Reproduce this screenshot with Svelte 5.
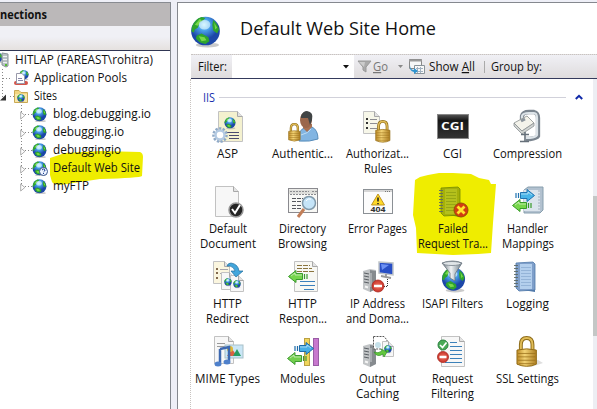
<script>
  const tree = [
    { text: 'HITLAP (FAREAST\\rohitra)', w: 138, x: 15, icon: 'server', ix: -6 },
    { text: 'Application Pools', w: 93, x: 34, icon: 'pools', ix: 13 },
    { text: 'Sites', w: 23, x: 34, icon: 'folder', ix: 14 },
    { text: 'blog.debugging.io', w: 98, x: 53, icon: 'globe', ix: 32 },
    { text: 'debugging.io', w: 71, x: 53, icon: 'globe', ix: 32 },
    { text: 'debuggingio', w: 68, x: 53, icon: 'globe', ix: 32 },
    { text: 'Default Web Site', w: 87, x: 53, icon: 'globeq', ix: 32 },
    { text: 'myFTP', w: 36, x: 53, icon: 'globe', ix: 32 }
  ];
  const features = [
    ['asp', ['ASP', 21]],
    ['authn', ['Authentic...', 61]],
    ['authz', ['Authorizat...', 63], ['Rules', 28]],
    ['cgi', ['CGI', 19]],
    ['compress', ['Compression', 69]],
    ['defdoc', ['Default', 38], ['Document', 56]],
    ['browse', ['Directory', 47], ['Browsing', 49]],
    ['error', ['Error Pages', 59]],
    ['failed', ['Failed', 30], ['Request Tra...', 70]],
    ['handler', ['Handler', 41], ['Mappings', 52]],
    ['redirect', ['HTTP', 29], ['Redirect', 43]],
    ['response', ['HTTP', 29], ['Respon...', 48]],
    ['ip', ['IP Address', 55], ['and Doma...', 63]],
    ['isapi', ['ISAPI Filters', 61]],
    ['logging', ['Logging', 43]],
    ['mime', ['MIME Types', 65]],
    ['modules', ['Modules', 45]],
    ['output', ['Output', 37], ['Caching', 43]],
    ['filtering', ['Request', 41], ['Filtering', 43]],
    ['ssl', ['SSL Settings', 63]]
  ];
</script>

{#snippet label(text, w, cls = '')}
  <svg class="label {cls}" width={w} height="15"><text x="0" y="12" textLength={w} lengthAdjust="spacingAndGlyphs">{text}</text></svg>
{/snippet}

{#snippet globe(x, y, s)}
  <g transform="translate({x} {y}) scale({s / 32})">
    <ellipse cx="18" cy="30" rx="12" ry="2.500" fill="#8a8a8a" opacity=".45" />
    <circle cx="16" cy="15.500" r="14.800" fill="url(#sea)" />
    <path d="M2 11Q5 3 12 1L16 2L13 5L10 7L8 12L5 14L4 17L1.500 16ZM24 4Q29 8 30 14L28 18L24 15L23 9ZM7 20L12 18L19 22L20 26L16 29Q9 28 6 23Z" fill="#2fa52d" />
    <path d="M5 9L10 3L12 4L8 10ZM25 7L28 12L26 14ZM9 21L15 22L17 25L12 26Z" fill="#78d84a" />
    <ellipse cx="15" cy="9" rx="6" ry="5" fill="#e8fbff" opacity=".6" />
  </g>
{/snippet}

{#snippet page(x, y, w, h, fill = '#f7f7f7')}
  <path d="M{x + .5} {y + .5}h{w - 6}l5 5v{h - 6}h{-w + 1}Z" {fill} stroke="#c2c2c2" />
  <path d="M{x + w - 5.5} {y + .5}v5h5" fill="#e3e3e3" stroke="#a8a8a8" />
{/snippet}

{#snippet lock(x, y, s)}
  <g transform="translate({x} {y}) scale({s})">
    <path d="M5 15V9Q5 2 11 2Q17 2 17 9V15" fill="none" stroke="#8d6b18" stroke-width="4" />
    <path d="M5 15V9Q5 2 11 2Q17 2 17 9V15" fill="none" stroke="#e1bd58" stroke-width="2" />
    <path d="M1 14.500Q11 12 21 14.500V29Q11 33.500 1 29Z" fill="url(#gold)" stroke="#936c16" />
    <path d="M2 18H20M2 21.500H20M2 25H20M3 28.500H19" stroke="#9a701b" stroke-width=".8" />
  </g>
{/snippet}

{#snippet arrow(x, y, dir, a, b)}
  <g transform="translate({x} {y}) scale({dir} 1)">
    <path d="M1 4V9M3.500 4V9" stroke={b} stroke-width="1.200" />
    <path d="M5.500 3.500H12V.5L19.500 6.500L12 12.500V9.500H5.500Z" fill={a} stroke={b} />
    <path d="M6 5H13V3L17 6" fill="none" stroke="#fff" opacity=".5" />
  </g>
{/snippet}

{#snippet tower(x, y)}
  <g transform="translate({x} {y})">
    <path d="M0 2L7 0L13 1V20L7 23L0 20Z" fill="#c1c4c6" />
    <path d="M7 1L13 2V20L7 23Z" fill="#868b8f" />
    <path d="M1 4L6 5M1 7L6 8M1 10L6 11M1 13L6 14" stroke="#5a5f64" />
    <path d="M2 17.500l3 1" stroke="#f5f5f5" stroke-width="2" />
    <path d="M8 4v14" stroke="#c9cdd0" />
  </g>
{/snippet}

{#snippet notebook(a, b, c, d)}
  <path d="M5 2L23 5V31L5 28Z" fill={b} />
  <path d="M4 2L21 1L23 3V29L7 30L4 27Z" fill={a} stroke={b} stroke-width=".8" />
  <path d="M8 3L20 3V28L8 28Z" fill={c} />
  <path d="M9 6.500H19M9 9.500H19M9 12.500H19M9 15.500H19M9 18.500H19M9 21.500H19M9 24.500H19" stroke={d} stroke-width=".7" />
  <path d="M2 4.500h4M2 7.500h4M2 10.500h4M2 13.500h4M2 16.500h4M2 19.500h4M2 22.500h4M2 25.500h4" stroke="#5c6964" stroke-width=".9" />
{/snippet}

{#snippet minus(x, y, r)}
  <circle cx={x} cy={y} {r} fill="url(#red)" stroke="#a92b22" stroke-width=".8" />
  <path d="M{x - r + 2} {y}h{2 * r - 4}" stroke="#fff" stroke-width="2.500" />
{/snippet}

{#snippet feature(name)}
  <svg class="ficon" width="32" height="32" viewBox="0 0 32 32">
    {#if name === 'asp'}
      {@render page(6, 0, 25, 31, '#f4f1cf')}
      {@render globe(12, 6, 12)}
      <path d="M15 21.500h12M17 24.500h10M17 27.500h10" stroke="#4a4a70" />
      <circle cx="8" cy="24" r="6.300" fill="none" stroke="#8fa9c6" stroke-width="3" stroke-dasharray="2.200 1.300" />
      <circle cx="8" cy="24" r="4.500" fill="#fff" stroke="#b4cae2" stroke-width="2.500" />
    {:else if name === 'authn'}
      <path d="M12 30Q11 18 18 17L25 16Q31 19 31 28Q23 31 12 30Z" fill="#82b5e2" stroke="#598db9" />
      <path d="M16 17L20 21L25 16V13H16Z" fill="#a97152" />
      <ellipse cx="19" cy="9" rx="6" ry="8" fill="#9b674c" />
      <path d="M14 5Q16 0 20 0Q27 1 25 9L23 14L21 7L14 7Z" fill="#414445" />
      <path d="M14 24Q22 22 24 18" stroke="#bddcf4" fill="none" />
      {@render lock(1, 12, .58)}
    {:else if name === 'authz'}
      {@render page(1, 0, 17, 23, '#f7f7e9')}
      <path d="M4 8h2M4 12h2M4 17h2" stroke="#333" stroke-width="2" />
      <path d="M8 8.500h7M8 12.500h7M8 17.500h7" stroke="#8d8d92" />
      {@render lock(13, 9, .71)}
    {:else if name === 'cgi'}
      <rect x=".5" y="3.500" width="31" height="24" fill="url(#black)" stroke="#888" />
      <text x="4" y="19" textLength="23" lengthAdjust="spacingAndGlyphs" fill="#fff" font-size="10" font-weight="700">CGI</text>
    {:else if name === 'compress'}
      <path d="M10 10V5Q11 1 17 1H22Q26 2 26 7V25Q25 27 18 28H14" fill="none" stroke="#7b858f" stroke-width="4.300" />
      <path d="M10 10V5Q11 2 17 2H22Q25 2 25 7V24Q24 26 18 27H14" fill="none" stroke="#dce3e8" stroke-width="2.200" />
      <path d="M2 12L15 5L22 12L10 20Z" fill="#f4f3eb" stroke="#a1a5a3" />
      <path d="M2 12V15L10 23L22 15V12L10 20Z" fill="#d2d5d3" stroke="#8b9193" stroke-width=".8" />
      <path d="M9 10L13 8" stroke="#8b949c" stroke-width="3" />
      <path d="M13 21V30M8 30.500H17M9 23.500H17" stroke="#66707a" stroke-width="1.600" />
    {:else if name === 'defdoc'}
      {@render page(3, 0, 24, 31)}
      <circle cx="24" cy="24" r="7" fill="#242424" stroke="#979797" stroke-width="1.500" />
      <path d="M20 23L23 27L28 19" fill="none" stroke="#fff" stroke-width="2" />
    {:else if name === 'browse'}
      <rect x="1.500" y="2.500" width="29" height="24" fill="#f8f8f5" stroke="#8a8a8f" />
      <path d="M2 3.500H30V8H2Z" fill="#dededa" /><path d="M3 5.500H22M25 5.500h5M3 8.500h26" stroke="#8c8c90" stroke-dasharray="2 1" />
      <path d="M5 12.500h11M5 15.500h10M5 19.500h9M5 22.500h9" stroke="#55575c" stroke-dasharray="4 1" />
      <path d="M17 23L11 31" stroke="#c27e58" stroke-width="3" />
      <circle cx="22" cy="17" r="6.500" fill="#c5e4f8" stroke="#8199aa" stroke-width="1.500" />
      <path d="M19 15Q21 12 24 13" stroke="#fff" fill="none" />
    {:else if name === 'error'}
      <rect x="1.500" y="3.500" width="29" height="24" fill="#fcfcfc" stroke="#8b9095" />
      <path d="M2 5H30" stroke="#d6d6d6" stroke-width="2" /><path d="M23 5.500h6" stroke="#777" stroke-dasharray="1 1" />
      <path d="M16 8L22.500 19H9.500Z" fill="#ffd927" stroke="#bf9421" />
      <path d="M16 11.500v4M16 17v1.300" stroke="#222" stroke-width="1.600" />
      <text x="8.500" y="26" textLength="15" lengthAdjust="spacingAndGlyphs" font-size="7.500" font-weight="700" fill="#333">404</text>
    {:else if name === 'failed'}
      {@render notebook('#a5b009', '#758a00', '#b4c01c', '#8b9c10')}
      <circle cx="24" cy="24" r="7" fill="#d33d11" stroke="#965105" />
      <path d="M20.500 20.500L27.500 27.500M27.500 20.500L20.500 27.500" stroke="#ffe52c" stroke-width="2.800" />
    {:else if name === 'handler'}
      <path d="M12 4L16 1H31V24L28 27H12Z" fill="#b2c1cf" stroke="#889fae" />
      <rect x="12" y="4" width="16" height="21" fill="#dbe4ec" />
      <path d="M27 4V25" stroke="#a1b0bd" stroke-dasharray="2 1" />
      {@render arrow(3, 3, 1, '#48b5e8', '#2074b1')}
      {@render arrow(20, 13, -1, '#77d64a', '#379b27')}
    {:else if name === 'redirect'}
      {@render page(1, 0, 17, 23, '#fbf6df')}
      <path d="M4 8h2M4 12h2M4 17h2" stroke="#836a4d" stroke-width="2" /><path d="M8 8.500h8M8 12.500h4" stroke="#a5a5ae" />
      {@render page(9, 11, 14, 18)}
      {@render page(18, 14, 14, 17)}
      {@render globe(12, 17, 8)}{@render globe(21, 19, 8)}
      <path d="M15 5Q16 2 19 2Q26 3 27 10H31L24 16L19 10H23Q22 6 18 5Z" fill="#42a6dc" stroke="#236f9e" stroke-width=".7" />
    {:else if name === 'response'}
      {@render page(7, 0, 24, 31, '#f8f8f4')}
      <path d="M10 4.500h13M10 7.500h15M10 10.500h17" stroke="#8b753e" stroke-dasharray="5 1" />
      <path d="M13 20.500h15M13 24.500h15M17 28.500h10" stroke="#3c80bd" />
      {@render arrow(21, 9, -1, '#75d54c', '#399a2d')}
    {:else if name === 'ip'}
      {@render tower(1, 8)}
      <path d="M17 1L31 2V14L17 12Z" fill="#284fc6" stroke="#c0c5c9" stroke-width="1.500" />
      <path d="M19 3L27 4L20 9Z" fill="#6c91f4" /><path d="M24 13V16M19 15L29 17" stroke="#999" stroke-width="1.800" />
      <path d="M25.500 18V25.500H20" fill="none" stroke="#333" stroke-dasharray="1 1" />
      {@render minus(16, 25, 6)}
    {:else if name === 'isapi'}
      {@render globe(4, 6, 25)}
      <path d="M5 2Q16 -2 25 2L18 13V20L13 17V12Z" fill="url(#metal)" stroke="#66717c" stroke-width=".8" />
      <ellipse cx="15" cy="2.500" rx="9" ry="2" fill="#e0e5e8" stroke="#77818a" stroke-width=".8" />
    {:else if name === 'logging'}
      {@render notebook('#7f9fca', '#4f78a9', '#b3cfed', '#86a8cf')}
    {:else if name === 'mime'}
      {@render page(2, 0, 20, 28)}
      <path d="M5 7.500h8M5 10.500h8" stroke="#999" />
      <rect x="13" y="9" width="18" height="13" fill="#cae6f6" stroke="#a8c0c8" />
      <path d="M15 20L20 13L25 20Z" fill="#da6241" /><path d="M21 20L25 13L29 20Z" fill="#269c62" /><circle cx="18" cy="13" r="3" fill="#e0b836" />
      <path d="M8 13L17 11V25M8 13V27" fill="none" stroke="#3c68b0" stroke-width="2.500" />
      <ellipse cx="6" cy="28" rx="3.500" ry="2.500" fill="#4e80cb" /><ellipse cx="15" cy="26" rx="3.500" ry="2.500" fill="#4e80cb" />
    {:else if name === 'modules'}
      <rect x="17.500" y="2.500" width="5" height="27" fill="#f0d55b" stroke="#baa044" />
      <rect x="26.500" y="2.500" width="5" height="27" fill="#c878ce" stroke="#995ca5" />
      {@render arrow(7, 6, 1, '#48afe5', '#1c6baa')}
      {@render arrow(20, 16, -1, '#72cf4d', '#409b34')}
    {:else if name === 'output'}
      {@render tower(1, 8)}
      <path d="M11.500 .5H22L25 4V13H11.500Z" fill="#fff" stroke="#555" stroke-dasharray="2 1" />
      <circle cx="16" cy="9" r="3" fill="#c6e1ea" />
      {@render page(20, 5, 12, 16)}
      {@render globe(22, 9, 8)}
      <path d="M12 16Q16 18 20 15L19 13L25 16L22 21L21 18Q15 22 12 16Z" fill="#63c83d" stroke="#339326" stroke-width=".7" />
    {:else if name === 'filtering'}
      {@render page(4, 0, 24, 31)}
      <path d="M13 6.500h7M13 10.500h12M13 14.500h12M13 18.500h12M13 22.500h12M8 26.500h17" stroke="#3c81b9" />
      <circle cx="6" cy="9" r="5" fill="#4aaa57" stroke="#2b8140" /><path d="M3 9L5.500 11.500L9.500 6.500" fill="none" stroke="#fff" stroke-width="1.700" />
      {@render minus(6, 21, 5.500)}
    {:else if name === 'ssl'}
      <path d="M8 29L26 24L31 27L19 31Z" fill="#dedede" />
      {@render lock(4, 0, .97)}
    {/if}
  </svg>
{/snippet}

<svg class="defs" width="0" height="0">
  <defs>
    <radialGradient id="sea" cx="45%" cy="28%"><stop offset="0" stop-color="#c0f0ff" /><stop offset=".4" stop-color="#4ba3ec" /><stop offset="1" stop-color="#1c47a8" /></radialGradient>
    <linearGradient id="gold"><stop offset="0" stop-color="#bd8b27" /><stop offset=".4" stop-color="#f3d375" /><stop offset="1" stop-color="#ad7e22" /></linearGradient>
    <linearGradient id="black" x2="0" y2="1"><stop offset="0" stop-color="#555" /><stop offset=".25" stop-color="#171717" /><stop offset="1" stop-color="#333" /></linearGradient>
    <linearGradient id="metal"><stop offset="0" stop-color="#69747c" /><stop offset=".45" stop-color="#f0f3f5" /><stop offset="1" stop-color="#6a7b87" /></linearGradient>
    <radialGradient id="red"><stop offset="0" stop-color="#ef7461" /><stop offset="1" stop-color="#c9332a" /></radialGradient>
  </defs>
</svg>

<div class="window">
  <aside>
    <header>{@render label('nections', 47, 'bold')}</header>
    <div class="toolbar"></div>
    <div class="tree">
      <svg class="guides" width="60" height="150"><path d="M2.500 18V47M3 27.500H12M10 45.500H14M21.500 54V135M22 63.500H32M22 81.500H32M22 99.500H32M22 117.500H32M22 135.500H32" fill="none" stroke="#888" stroke-dasharray="1 2" /></svg>
      <svg class="mark" width="94" height="35"><path d="M0 7L15 2L50 0L90 1Q93 2 93 6L92 25Q90 27 50 28L30 31L17 33Q5 35 2 31L0 24Z" fill="#efed00" /></svg>
      {#each tree as item, i}
        <div class="node">
          {#if i > 2}
            <svg class="twist" style:left="20px" width="6" height="9"><path d="M.7 1L4.800 4.500L.7 8Z" fill="#fff" stroke="#999" stroke-width=".8" /></svg>
          {:else if i === 2}
            <svg class="twist" style:left="0px" width="7" height="9"><path d="M6 1.500V7.500H0Z" fill="#333" /></svg>
          {/if}
          <svg class="ticon" style:left="{item.ix}px" width="16" height="16">
            {#if item.icon === 'globe'}
              {@render globe(0, 1, 15)}
            {:else if item.icon === 'globeq'}
              {@render globe(0, 1, 15)}
              <circle cx="11.500" cy="11.500" r="4" fill="#eef4ff" stroke="#38558e" /><path d="M10 10Q11.500 8 13 10Q13 11 11.500 12M11.500 13v1" fill="none" stroke="#183d91" />
            {:else if item.icon === 'folder'}
              <path d="M.5 2.500H5L7 4.500H13.500V14.500H.5Z" fill="#f1d680" stroke="#c9a955" /><path d="M1 6H13V14H1Z" fill="#f8e7a7" />{@render globe(3, 6, 8)}
            {:else if item.icon === 'server'}
              {@render globe(-2, 0, 11)}<path d="M8 1L14 2V14L12 15L8 13Z" fill="#b9c1c6" stroke="#8a9499" /><path d="M9 4.500h4M9 7.500h4M9 10.500h4" stroke="#eff2f2" /><rect x="11" y="12" width="2" height="2" fill="#53bd32" />
            {:else}
              {@render globe(6, 0, 10)}<rect x="1" y="11" width="14" height="4" rx="2" fill="#d4554b" /><path d="M3.500 3.500H9L11.500 6V13.500H3.500Z" fill="#fff" stroke="#99a" /><path d="M5 8.500h4M5 10.500h5" stroke="#88a" />
            {/if}
          </svg>
          <span style:margin-left="{item.x}px">{@render label(item.text, item.w)}</span>
        </div>
      {/each}
    </div>
  </aside>

  <main>
    <div class="title">
      <svg width="31" height="32">{@render globe(0, 0, 31)}</svg>
      <svg class="heading" width="197" height="30"><text x="0" y="20" textLength="196" lengthAdjust="spacingAndGlyphs">Default Web Site Home</text></svg>
    </div>
    <div class="filter">
      <span class="caption">{@render label('Filter:', 29, 'semi')}</span>
      <div class="combo"><svg width="7" height="4"><path d="M0 0H6L3 3.500Z" fill="#111" /></svg></div>
      <svg class="funnel" width="15" height="14"><path d="M1 1H14L9 7V12L6 10V7Z" fill="#aaa" stroke="#999" /><path d="M2 2H8L7 7" fill="#ccc" /></svg>
      <svg class="label go" width="15" height="15"><text y="12" textLength="15" lengthAdjust="spacingAndGlyphs"><tspan class="u">G</tspan>o</text></svg>
      <svg class="down" width="6" height="4"><path d="M0 0H5L2.500 3Z" fill="#888" /></svg>
      <svg class="showicon" width="17" height="16"><path d="M.5 .5H12.500V9.500H.5Z" fill="#f6f7f7" stroke="#888" /><path d="M0 1.500H13" stroke="#999" stroke-width="2" /><path d="M5.500 6.500H15.500V14.500H5.500Z" fill="#f8f8f8" stroke="#899399" /><path d="M7 9.500h7M7 12.500h7M8.500 8v6M11.500 8v6" stroke="#a1b1c0" /><path d="M1 6Q1 11 5 11V9L9 12L5 15V13Q0 12 1 6Z" fill="#2e93cf" /></svg>
      <svg class="label show" width="46" height="15"><text y="12" textLength="46" lengthAdjust="spacingAndGlyphs">Show <tspan class="u">A</tspan>ll</text></svg>
      <i></i>
      {@render label('Group by:', 51, 'semi')}
    </div>
    <section>
      <div class="content">
        <div class="group">{@render label('IIS', 12, 'blue')}<hr /><svg width="8" height="6"><path d="M.8 5L4 1.800L7.200 5" fill="none" stroke="#1029a8" stroke-width="2" /></svg></div>
        <div class="grid">
          <svg class="mark2" width="84" height="84"><path d="M2 7L7 4L15 2L26 0L40 0L58 1L66 5L76 7L78 11H83L80 50L78 80L65 81L40 82L4 80L3 55L0 42Z" fill="#efed00" /></svg>
          {#each features as [icon, ...lines]}
            <div class="cell">
              {@render feature(icon)}
              {#each lines as [text, w]}
                {@render label(text, w)}
              {/each}
            </div>
          {/each}
        </div>
      </div>
      <div class="scroll"><b></b></div>
    </section>
  </main>
</div>

<style>
  :global(body) { margin: 0; overflow: hidden; }
  .defs { position: absolute; }
  svg { display: block; flex: none; }
  svg text { font-family: "Open Sans", "Noto Sans", sans-serif; }
  .window { width: 597px; height: 409px; box-sizing: border-box; padding-top: 2px; display: flex; gap: 6px; background: #eeeff7; overflow: hidden; }
  aside { width: 171px; box-sizing: border-box; border-top: 1px solid #888b91; border-right: 1px solid #83878e; display: flex; flex-direction: column; background: #fff; }
  header { height: 23px; padding-top: 4px; box-sizing: border-box; background: #bbb8b9; }
  .toolbar { height: 24px; border-bottom: 1px solid #303653; background: linear-gradient(#f0f0f5 0 45%, #e5e1df); }
  .tree { position: relative; flex: 1; padding-top: 1px; }
  .guides { position: absolute; left: 0; top: 0; }
  .mark { position: absolute; left: 50px; top: 100px; }
  .node { height: 18px; display: flex; position: relative; }
  .node span { height: 15px; }
  .twist { position: absolute; top: 5px; }
  .ticon { position: absolute; top: 0; }
  .label { overflow: visible; }
  .label text { font-size: 12.300px; fill: #111; }
  .bold text { font-weight: 700; }
  .semi text { font-weight: 500; }
  .blue text { fill: #1830ae; }
  .u { text-decoration: underline; }
  main { flex: 1; border-top: 1px solid #85888f; border-left: 1px solid #85888f; padding-left: 12px; background: #fff; }
  .title { height: 51px; box-sizing: border-box; padding-top: 13px; display: flex; gap: 19px; }
  .title svg { overflow: visible; }
  .heading { margin-top: -1px; }
  .heading text { font-size: 18.500px; fill: #111; }
  .filter { height: 25px; display: flex; align-items: center; border-top: 1px dotted #c8c3c0; border-bottom: 1px solid #343a5c; box-sizing: border-box; background: linear-gradient(#f0f0f5, #dfdcdd); margin-left: 1px; }
  .caption { margin-left: 7px; }
  .combo { margin-left: 5px; width: 122px; height: 23px; display: flex; align-items: center; justify-content: flex-end; box-sizing: border-box; padding-right: 4px; background: #fff; }
  .funnel { margin-left: 3px; }
  .go { margin-left: 1px; }
  .go text { fill: #777; }
  .down { margin-left: 10px; }
  .showicon { margin-left: 5px; }
  .show { margin-left: 3px; }
  .filter i { width: 1px; height: 12px; background: #aaa; margin: 0 6px 0 9px; }
  section { height: 330px; display: flex; border-left: 1px dotted #c8c3c0; }
  .content { width: 402px; }
  .group { height: 32px; display: flex; align-items: flex-start; padding: 11px 10px 0 12px; box-sizing: border-box; }
  .group hr { flex: 1; border: 0; border-top: 1px solid #d1d1da; margin: 7px 9px 0 4px; }
  .group > svg:last-child { margin-top: 4px; }
  .grid { position: relative; display: grid; grid-template-columns: repeat(5, 75px); grid-auto-rows: 75px; margin-left: -1px; }
  .mark2 { position: absolute; left: 223px; top: 62px; }
  .cell { position: relative; display: flex; flex-direction: column; align-items: center; }
  .ficon { margin-bottom: 3px; overflow: visible; }
  .scroll { flex: 1; background: #edeef3; padding-top: 117px; }
  .scroll b { display: block; height: 140px; background: #c4c7c6; }
</style>
